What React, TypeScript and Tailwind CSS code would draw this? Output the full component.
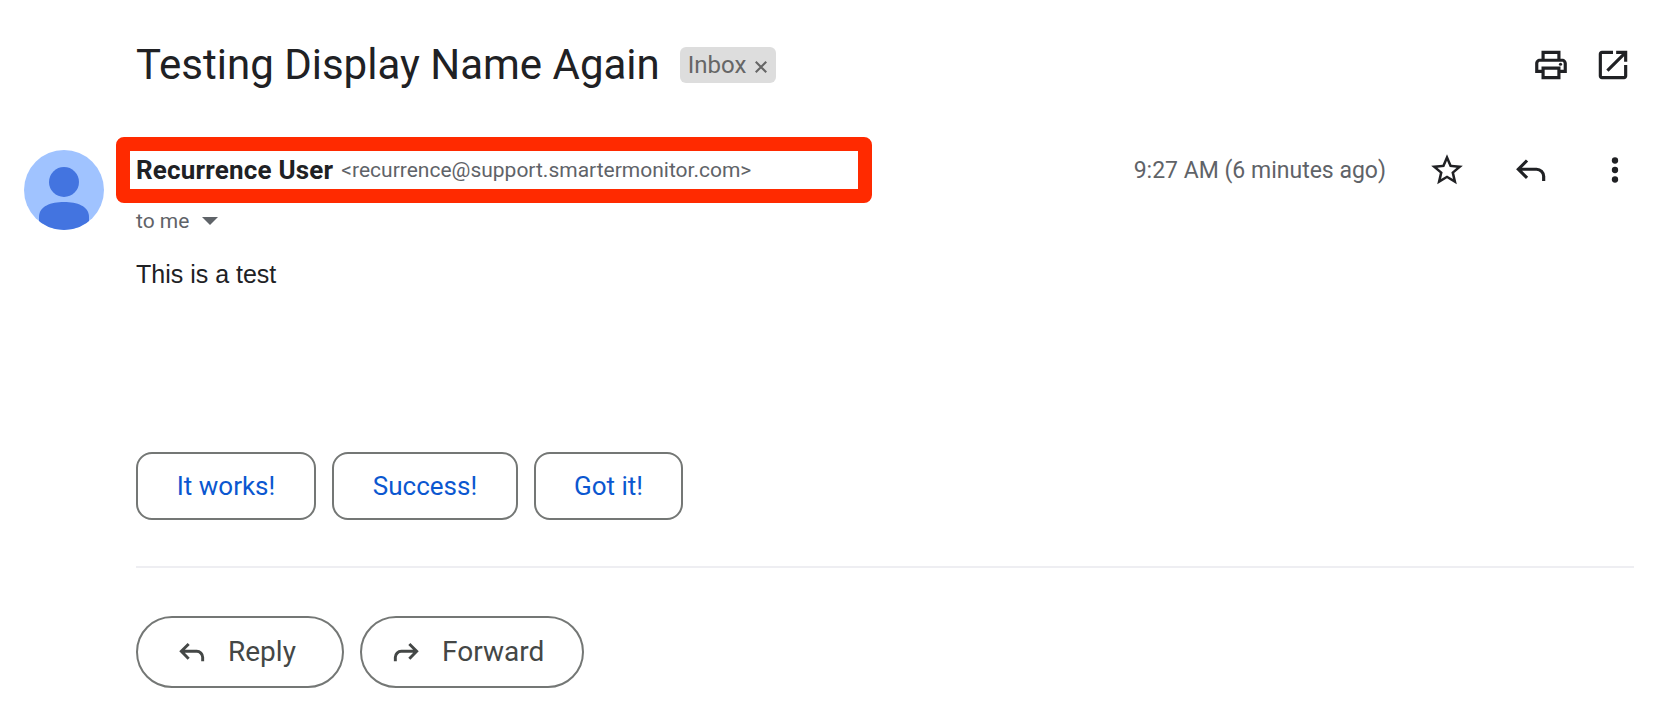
export default function App() {
  return (
    <div className="relative h-[708px] w-[1662px] overflow-hidden bg-white font-['Roboto',sans-serif] text-[#202124]">
      {/* Subject row */}
      <div className="flex h-[132px] items-center pb-[2px] pl-[136px] pr-[30px]">
        <h1 className="text-[42px] font-normal leading-none">Testing Display Name Again</h1>
        <span className="ml-[20px] flex h-[36px] items-center gap-[8px] rounded-[6px] bg-[#dddddd] px-[8px] text-[24px] text-[#666666]">
          Inbox
          <svg viewBox="0 0 12 12" className="mt-[3px] h-[14px] w-[14px]" fill="none" stroke="#666666" strokeWidth="1.8">
            <path d="M1.5 1.5l9 9M10.5 1.5l-9 9" />
          </svg>
        </span>
        <div className="ml-auto flex items-center gap-[24px]">
          <svg viewBox="0 0 24 24" className="h-[38px] w-[38px]" fill="#202124">
            <path d="M19 8h-1V3H6v5H5c-1.66 0-3 1.34-3 3v6h4v4h12v-4h4v-6c0-1.66-1.34-3-3-3zM8 5h8v3H8V5zm8 14H8v-4h8v4zm4-4h-2v-2H6v2H4v-4c0-.55.45-1 1-1h14c.55 0 1 .45 1 1v4z" />
            <circle cx="18" cy="11.5" r="1" />
          </svg>
          <svg viewBox="0 0 24 24" className="h-[38px] w-[38px]" fill="#202124">
            <path d="M19 19H5V5h7V3H5c-1.11 0-2 .9-2 2v14c0 1.1.89 2 2 2h14c1.1 0 2-.9 2-2v-7h-2v7zM14 3v2h3.59l-9.83 9.83 1.41 1.41L19 6.41V10h2V3h-7z" />
          </svg>
        </div>
      </div>

      {/* Sender and message */}
      <div className="flex pl-[24px] pr-[28px]">
        <svg viewBox="0 0 80 80" className="mt-[18px] h-[80px] w-[80px] shrink-0">
          <defs>
            <clipPath id="avatar-clip">
              <circle cx="40" cy="40" r="40" />
            </clipPath>
          </defs>
          <circle cx="40" cy="40" r="40" fill="#a0c3ff" />
          <g clipPath="url(#avatar-clip)" fill="#4374e0">
            <circle cx="40" cy="32" r="15" />
            <path d="M15 80V67c0-11 12-15 25-15s25 4 25 15v13z" />
          </g>
        </svg>
        <div className="ml-[32px] min-w-0 flex-1">
          <div className="flex h-[76px] items-center">
            <span className="text-[26px] font-bold leading-none tracking-[0.2px]">Recurrence User</span>
            <span className="ml-[8px] text-[21px] leading-none text-[#5f6368]">&lt;recurrence@support.smartermonitor.com&gt;</span>
            <span className="ml-auto text-[23px] leading-none text-[#5f6368]">9:27 AM (6 minutes ago)</span>
            <svg viewBox="0 0 24 24" className="ml-[42px] h-[38px] w-[38px]" fill="#202124">
              <path d="M22 9.24l-7.19-.62L12 2 9.19 8.63 2 9.24l5.46 4.73L5.82 21 12 17.27 18.18 21l-1.63-7.03L22 9.24zM12 15.4l-3.76 2.27 1-4.28-3.32-2.88 4.38-.38L12 6.1l1.71 4.04 4.38.38-3.32 2.88 1 4.28L12 15.4z" />
            </svg>
            <svg viewBox="0 0 24 24" className="ml-[46px] h-[38px] w-[38px]" fill="none" stroke="#202124" strokeWidth="2">
              <path d="M9.5 6L4 11.5 9.5 17M4 11.5h11.5a4.5 4.5 0 0 1 4.5 4.5v3" />
            </svg>
            <svg viewBox="0 0 24 24" className="ml-[46px] h-[38px] w-[38px]" fill="#202124">
              <circle cx="12" cy="6" r="2" />
              <circle cx="12" cy="12" r="2" />
              <circle cx="12" cy="18" r="2" />
            </svg>
          </div>
          <div className="flex h-[26px] items-center text-[21px] leading-none text-[#5f6368]">
            to me
            <svg viewBox="0 0 16 8" className="ml-[13px] h-[8px] w-[16px]" fill="#5f6368">
              <path d="M0 0h16L8 8z" />
            </svg>
          </div>
          <p className="mt-[24px] font-['Liberation_Sans',sans-serif] text-[25px] leading-[32px] text-[#202124]">This is a test</p>

          {/* Smart replies */}
          <div className="mt-[162px] flex gap-[16px] text-[26px] leading-none text-[#0b57d0]">
            <button className="h-[68px] w-[180px] rounded-[16px] border-2 border-[#747775]">It works!</button>
            <button className="h-[68px] w-[186px] rounded-[16px] border-2 border-[#747775]">Success!</button>
            <button className="h-[68px] w-[149px] rounded-[16px] border-2 border-[#747775]">Got it!</button>
          </div>
          <div className="mt-[46px] h-[2px] bg-[#eeeef2]" />

          <div className="mt-[48px] flex gap-[16px] text-[28px] leading-none text-[#444746]">
            <button className="flex h-[72px] w-[208px] items-center rounded-full border-2 border-[#747775] pl-[38px]">
              <svg viewBox="0 0 24 24" className="h-[32px] w-[32px]" fill="none" stroke="#444746" strokeWidth="2.2">
                <path d="M9.5 6L4 11.5 9.5 17M4 11.5h11.5a4.5 4.5 0 0 1 4.5 4.5v3" />
              </svg>
              <span className="ml-[20px]">Reply</span>
            </button>
            <button className="flex h-[72px] w-[224px] items-center rounded-full border-2 border-[#747775] pl-[28px]">
              <svg viewBox="0 0 24 24" className="h-[32px] w-[32px]" fill="none" stroke="#444746" strokeWidth="2.2">
                <path d="M14.5 6L20 11.5 14.5 17M20 11.5H8.5A4.5 4.5 0 0 0 4 16v3" />
              </svg>
              <span className="ml-[20px]">Forward</span>
            </button>
          </div>
        </div>
      </div>

      {/* Red annotation box drawn over the message header */}
      <div className="absolute left-[116px] top-[137px] h-[66px] w-[756px] rounded-[8px] border-[14px] border-[#ff2a00]" />
    </div>
  );
}
